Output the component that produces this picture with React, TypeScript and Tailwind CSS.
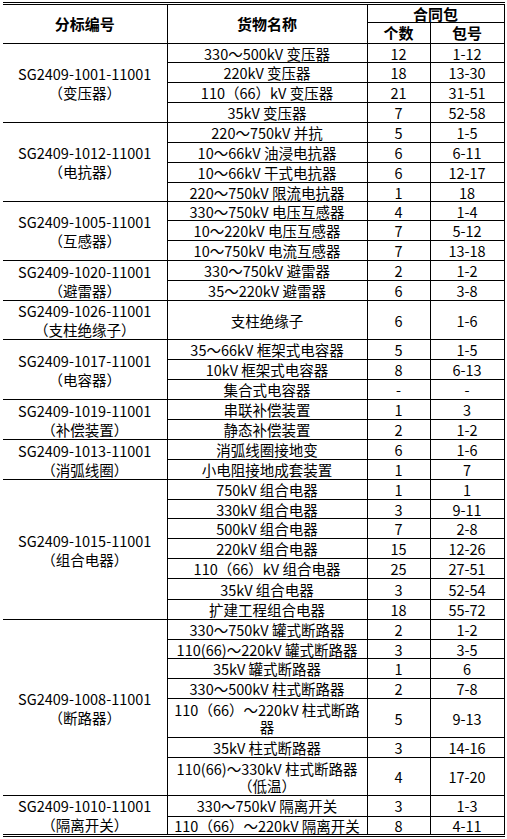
import React from 'react'

type Row = [string, string, string, number]
type Group = { code: string; name: string; rows: Row[] }

const groups: Group[] = [
  {
    code: 'SG2409-1001-11001',
    name: '（变压器）',
    rows: [
      ['330～500kV 变压器', '12', '1-12', 19],
      ['220kV 变压器', '18', '13-30', 20],
      ['110（66）kV 变压器', '21', '31-51', 20],
      ['35kV 变压器', '7', '52-58', 20],
    ],
  },
  {
    code: 'SG2409-1012-11001',
    name: '（电抗器）',
    rows: [
      ['220～750kV 并抗', '5', '1-5', 20],
      ['10～66kV 油浸电抗器', '6', '6-11', 20],
      ['10～66kV 干式电抗器', '6', '12-17', 20],
      ['220～750kV 限流电抗器', '1', '18', 19],
    ],
  },
  {
    code: 'SG2409-1005-11001',
    name: '（互感器）',
    rows: [
      ['330～750kV 电压互感器', '4', '1-4', 19],
      ['10～220kV 电压互感器', '7', '5-12', 20],
      ['10～750kV 电流互感器', '7', '13-18', 20],
    ],
  },
  {
    code: 'SG2409-1020-11001',
    name: '（避雷器）',
    rows: [
      ['330～750kV 避雷器', '2', '1-2', 20],
      ['35～220kV 避雷器', '6', '3-8', 20],
    ],
  },
  {
    code: 'SG2409-1026-11001',
    name: '（支柱绝缘子）',
    rows: [['支柱绝缘子', '6', '1-6', 39]],
  },
  {
    code: 'SG2409-1017-11001',
    name: '（电容器）',
    rows: [
      ['35～66kV 框架式电容器', '5', '1-5', 20],
      ['10kV 框架式电容器', '8', '6-13', 20],
      ['集合式电容器', '-', '-', 20],
    ],
  },
  {
    code: 'SG2409-1019-11001',
    name: '（补偿装置）',
    rows: [
      ['串联补偿装置', '1', '3', 20],
      ['静态补偿装置', '2', '1-2', 20],
    ],
  },
  {
    code: 'SG2409-1013-11001',
    name: '（消弧线圈）',
    rows: [
      ['消弧线圈接地变', '6', '1-6', 20],
      ['小电阻接地成套装置', '1', '7', 20],
    ],
  },
  {
    code: 'SG2409-1015-11001',
    name: '（组合电器）',
    rows: [
      ['750kV 组合电器', '1', '1', 20],
      ['330kV 组合电器', '3', '9-11', 19],
      ['500kV 组合电器', '7', '2-8', 20],
      ['220kV 组合电器', '15', '12-26', 20],
      ['110（66）kV 组合电器', '25', '27-51', 20],
      ['35kV 组合电器', '3', '52-54', 21],
      ['扩建工程组合电器', '18', '55-72', 20],
    ],
  },
  {
    code: 'SG2409-1008-11001',
    name: '（断路器）',
    rows: [
      ['330～750kV 罐式断路器', '2', '1-2', 20],
      ['110(66)～220kV 罐式断路器', '3', '3-5', 19],
      ['35kV 罐式断路器', '1', '6', 20],
      ['330～500kV 柱式断路器', '2', '7-8', 20],
      ['110（66）～220kV 柱式断路\n器', '5', '9-13', 39],
      ['35kV 柱式断路器', '3', '14-16', 20],
      ['110(66)～330kV 柱式断路器\n（低温）', '4', '17-20', 38],
    ],
  },
  {
    code: 'SG2409-1010-11001',
    name: '（隔离开关）',
    rows: [
      ['330～750kV 隔离开关', '3', '1-3', 20],
      ['110（66）～220kV 隔离开关', '8', '4-11', 19],
    ],
  },
]

const cell = 'border border-black text-center align-middle p-0 whitespace-pre-line leading-[17px]'
const head = 'border border-black text-center align-middle p-0 leading-[16px] text-[15px] font-bold'

export default function App() {
  return (
    <div className="min-h-screen bg-white pt-[2px] font-['Noto_Sans_CJK_SC',sans-serif] text-[14.5px] text-black">
      <table className="ml-[3px] w-[501px] table-fixed border-collapse border-x-0 border-y-[3px] border-double border-black">
        <colgroup>
          <col className="w-[164px]" />
          <col className="w-[200px]" />
          <col className="w-[63px]" />
          <col className="w-[74px]" />
        </colgroup>
        <thead>
          <tr className="h-[19px]">
            <th rowSpan={2} className={`${head} border-l-0`}>分标编号</th>
            <th rowSpan={2} className={head}>货物名称</th>
            <th colSpan={2} className={head}>合同包</th>
          </tr>
          <tr className="h-[21px]">
            <th className={head}>个数</th>
            <th className={head}>包号</th>
          </tr>
        </thead>
        <tbody>
          {groups.map((g) =>
            g.rows.map((r, i) => (
              <tr key={g.code + i} style={{ height: r[3] }}>
                {i === 0 && (
                  <td rowSpan={g.rows.length} className={`${cell} border-l-0 !leading-[19px]`}>
                    {g.code}
                    {'\n'}
                    {g.name}
                  </td>
                )}
                <td className={cell}>{r[0]}</td>
                <td className={cell}>{r[1]}</td>
                <td className={cell}>{r[2]}</td>
              </tr>
            ))
          )}
        </tbody>
      </table>
    </div>
  )
}
